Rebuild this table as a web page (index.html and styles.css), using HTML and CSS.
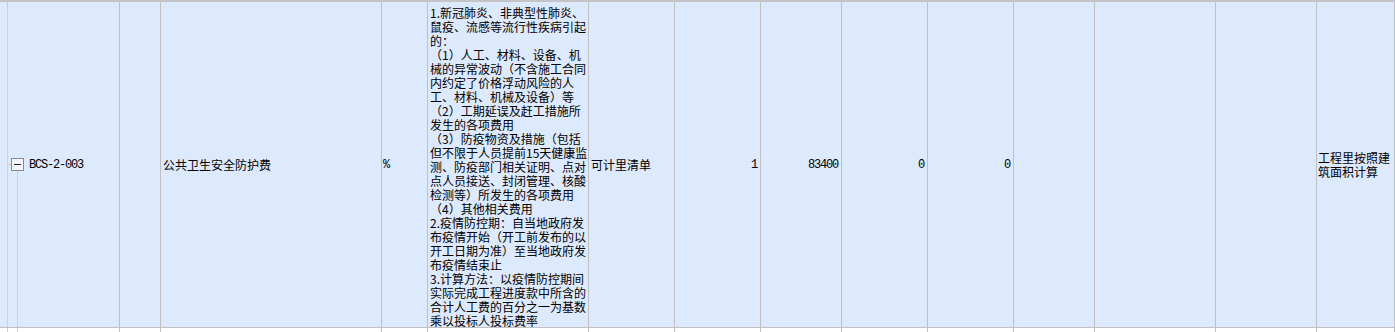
FILE: index.html
```html
<!DOCTYPE html>
<html lang="zh-CN">
<head>
<meta charset="utf-8">
<title>措施项目</title>
<link rel="stylesheet" href="styles.css">
</head>
<body>
<div class="sheet">
  <div class="row main">
    <div class="cell tree"><span class="toggle"></span><span class="code">BCS-2-003</span></div>
    <div class="cell"></div>
    <div class="cell name">公共卫生安全防护费</div>
    <div class="cell unit">%</div>
    <div class="cell desc">1.新冠肺炎、非典型性肺炎、<br>鼠疫、流感等流行性疾病引起<br>的：<br>（1）人工、材料、设备、机<br>械的异常波动（不含施工合同<br>内约定了价格浮动风险的人<br>工、材料、机械及设备）等<br>（2）工期延误及赶工措施所<br>发生的各项费用<br>（3）防疫物资及措施（包括<br>但不限于人员提前15天健康监<br>测、防疫部门相关证明、点对<br>点人员接送、封闭管理、核酸<br>检测等）所发生的各项费用<br>（4）其他相关费用<br>2.疫情防控期：自当地政府发<br>布疫情开始（开工前发布的以<br>开工日期为准）至当地政府发<br>布疫情结束止<br>3.计算方法：以疫情防控期间<br>实际完成工程进度款中所含的<br>合计人工费的百分之一为基数<br>乘以投标人投标费率</div>
    <div class="cell">可计里清单</div>
    <div class="cell num">1</div>
    <div class="cell num">83400</div>
    <div class="cell num">0</div>
    <div class="cell num">0</div>
    <div class="cell"></div>
    <div class="cell"></div>
    <div class="cell"></div>
    <div class="cell note">工程里按照建筑面积计算</div>
  </div>
  <div class="row sub">
    <div class="cell subtree"></div>
    <div class="cell"></div>
    <div class="cell"></div>
    <div class="cell"></div>
    <div class="cell"></div>
    <div class="cell"></div>
    <div class="cell"></div>
    <div class="cell"></div>
    <div class="cell"></div>
    <div class="cell"></div>
    <div class="cell"></div>
    <div class="cell"></div>
    <div class="cell"></div>
    <div class="cell"></div>
  </div>
</div>
</body>
</html>
```
FILE: styles.css
```css
html, body {
  margin: 0;
  padding: 0;
  overflow: hidden;
  background: #ffffff;
}

body {
  font-family: "Noto Sans CJK SC", "Noto Sans", sans-serif;
  font-size: 12px;
  color: #000000;
}

.sheet {
  border-top: 2px solid #c3c3c8;
}

.row {
  display: grid;
  grid-template-columns: 120px 41px 221px 46px 161px 86px 86px 81px 86px 86px 81px 121px 101px 78px;
}

.main {
  height: 326px;
  background: #dde9fc;
}

.sub {
  height: 4px;
  background: #ffffff;
}

.cell {
  box-sizing: border-box;
  min-width: 0;
  border-right: 1px solid #c0c0c0;
  display: flex;
  align-items: center;
  padding: 0 2px;
  line-height: 14px;
  overflow: hidden;
}

.main .cell {
  border-bottom: 1px solid #c0c0c0;
}

.tree {
  padding-left: 11px;
  background:
    linear-gradient(#ffc880, #ffc880) 7px 0 / 1px 100% no-repeat,
    linear-gradient(#ffc880, #ffc880) 8px 50% / 3px 1px no-repeat,
    linear-gradient(#ffc880, #ffc880) 17px 100% / 1px 157px no-repeat;
}

.subtree {
  background:
    linear-gradient(#ffc880, #ffc880) 7px 0 / 1px 100% no-repeat,
    linear-gradient(#ffc880, #ffc880) 17px 0 / 1px 100% no-repeat;
}

.toggle {
  box-sizing: border-box;
  flex: none;
  width: 13px;
  height: 13px;
  border: 1px solid #8a8a8a;
  background: #f3f6fb;
  display: flex;
  align-items: center;
  justify-content: center;
}

.toggle::before {
  content: "";
  width: 7px;
  height: 1px;
  background: #222222;
}

.code {
  margin-left: 5px;
  font-family: "Liberation Mono", "DejaVu Sans Mono", monospace;
  font-size: 12px;
  letter-spacing: -1.2px;
}

.unit {
  padding-left: 1px;
  font-family: "Liberation Mono", "DejaVu Sans Mono", monospace;
  font-size: 12px;
}

.desc {
  display: block;
  padding: 4px 1px 0 2px;
  white-space: nowrap;
}

.num {
  justify-content: flex-end;
  padding-right: 3px;
  font-family: "Liberation Mono", "DejaVu Sans Mono", monospace;
  font-size: 12px;
  letter-spacing: -1.2px;
}

.note {
  padding-left: 1px;
}
```
